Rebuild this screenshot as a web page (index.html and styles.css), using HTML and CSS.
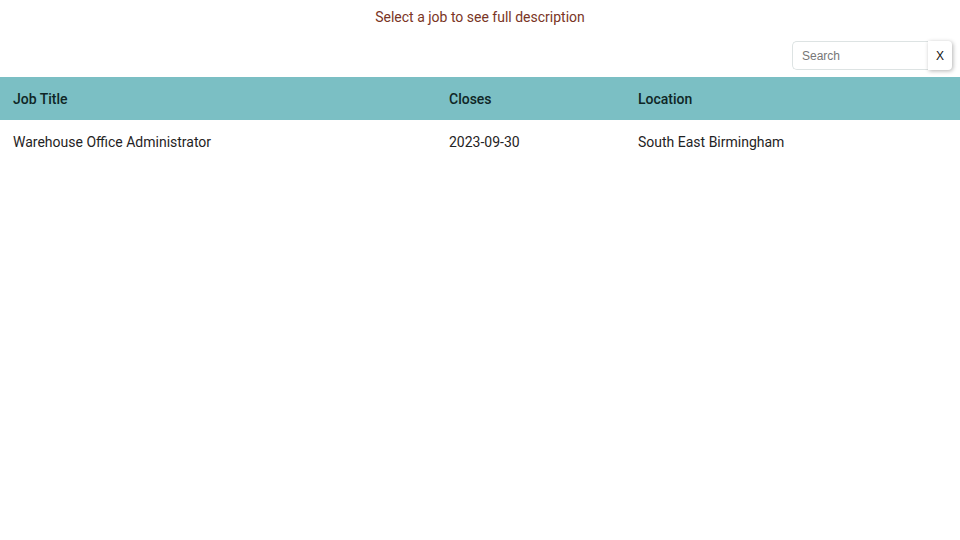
FILE: index.html
```html
<!DOCTYPE html>
<html>
<head>
<meta charset="utf-8">
<link rel="stylesheet" href="styles.css">
</head>
<body>
<div class="page">
  <p class="hint">Select a job to see full description</p>
  <div class="toolbar">
    <div class="search">
      <input class="search-input" type="text" placeholder="Search">
      <button class="clear">X</button>
    </div>
  </div>
  <table class="jobs">
    <thead>
      <tr><th class="c-title">Job Title</th><th class="c-close">Closes</th><th class="c-loc">Location</th></tr>
    </thead>
    <tbody>
      <tr><td>Warehouse Office Administrator</td><td>2023-09-30</td><td>South East Birmingham</td></tr>
    </tbody>
  </table>
</div>
</body>
</html>
```
FILE: styles.css
```css
html, body { margin: 0; padding: 0; background: #fff; }
body { font-family: Roboto, "Noto Sans", sans-serif; color: #212529; }
.page { width: 960px; }
.hint { margin: 0; padding-top: 9px; height: 32px; box-sizing: border-box; text-align: center; font-size: 14px; line-height: 17px; color: #7a3525; }
.toolbar { display: flex; justify-content: flex-end; padding: 9px 8px 7px 0; }
.search { display: flex; align-items: stretch; height: 29px; }
.search-input { width: 136px; box-sizing: border-box; border: 1px solid #dde3e3; border-right: none; border-radius: 5px 0 0 5px; padding: 0 9px; font-family: "Liberation Sans", Arial, sans-serif; font-size: 12px; color: #333; outline: none; }
.search-input::placeholder { color: #777; }
.clear { width: 24px; border: none; background: #fff; border-radius: 0 4px 4px 0; box-shadow: 1px 1px 4px rgba(0,0,0,0.3); font-family: "Liberation Sans", Arial, sans-serif; font-size: 12px; color: #111; padding: 0; }
.jobs { width: 960px; border-collapse: collapse; font-size: 14px; table-layout: fixed; }
.jobs th { background: #7bbfc4; text-align: left; font-weight: 500; color: #0f2626; height: 43px; padding: 0 13px; box-sizing: border-box; }
.jobs td { height: 43px; padding: 0 13px; color: #1f2324; }
.c-title { width: 436px; }
.c-close { width: 189px; }
```
